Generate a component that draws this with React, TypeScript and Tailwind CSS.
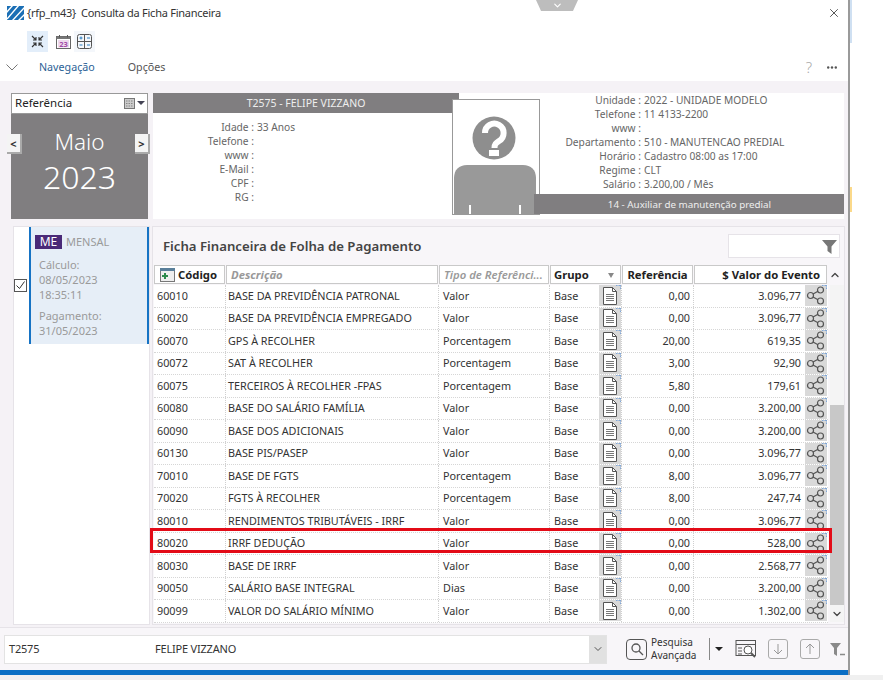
import React from 'react';
import { X, ChevronDown, ChevronUp } from 'lucide-react';

const rows = [
  ['60010', 'BASE DA PREVIDÊNCIA PATRONAL', 'Valor', '0,00', '3.096,77'],
  ['60020', 'BASE DA PREVIDÊNCIA EMPREGADO', 'Valor', '0,00', '3.096,77'],
  ['60070', 'GPS À RECOLHER', 'Porcentagem', '20,00', '619,35'],
  ['60072', 'SAT À RECOLHER', 'Porcentagem', '3,00', '92,90'],
  ['60075', 'TERCEIROS À RECOLHER -FPAS', 'Porcentagem', '5,80', '179,61'],
  ['60080', 'BASE DO SALÁRIO FAMÍLIA', 'Valor', '0,00', '3.200,00'],
  ['60090', 'BASE DOS ADICIONAIS', 'Valor', '0,00', '3.200,00'],
  ['60130', 'BASE PIS/PASEP', 'Valor', '0,00', '3.096,77'],
  ['70010', 'BASE DE FGTS', 'Porcentagem', '8,00', '3.096,77'],
  ['70020', 'FGTS À RECOLHER', 'Porcentagem', '8,00', '247,74'],
  ['80010', 'RENDIMENTOS TRIBUTÁVEIS - IRRF', 'Valor', '0,00', '3.096,77'],
  ['80020', 'IRRF DEDUÇÃO', 'Valor', '0,00', '528,00'],
  ['80030', 'BASE DE IRRF', 'Valor', '0,00', '2.568,77'],
  ['90050', 'SALÁRIO BASE INTEGRAL', 'Dias', '0,00', '3.200,00'],
  ['90099', 'VALOR DO SALÁRIO MÍNIMO', 'Valor', '0,00', '1.302,00'],
];

const leftInfo = [
  ['Idade', '33 Anos'],
  ['Telefone', ''],
  ['www', ''],
  ['E-Mail', ''],
  ['CPF', ''],
  ['RG', ''],
];

const rightInfo = [
  ['Unidade', '2022 - UNIDADE MODELO'],
  ['Telefone', '11 4133-2200'],
  ['www', ''],
  ['Departamento', '510 - MANUTENCAO PREDIAL'],
  ['Horário', 'Cadastro 08:00 as 17:00'],
  ['Regime', 'CLT'],
  ['Salário', '3.200,00 / Mês'],
];

const Corner = () => (
  <svg width="5" height="5" viewBox="0 0 5 5" className="absolute right-0 top-0">
    <path d="M0 0h5v5" fill="none" stroke="#7fa6d8" strokeWidth="2" strokeDasharray="1.5 1" />
  </svg>
);

const DocIcon = () => (
  <span className="relative flex h-[21px] w-[22px] items-center justify-center bg-[#d9d9d9]">
    <svg width="18" height="20" viewBox="0 0 18 20" fill="none" stroke="#555" strokeWidth="1">
      <path d="M2.5 1.5h9l4 4v13h-13z" fill="#fff" />
      <path d="M11.5 1.5v4h4" />
      <path d="M5 8.5h8M5 10.5h8M5 12.5h8M5 14.5h8" stroke="#777" />
    </svg>
    <Corner />
  </span>
);

const ShareIcon = () => (
  <span className="relative flex h-[21px] w-[22px] items-center justify-center bg-[#d9d9d9]">
    <svg width="20" height="19" viewBox="0 0 20 19" fill="none" stroke="#555" strokeWidth="1.2">
      <circle cx="4.5" cy="9.5" r="3" />
      <circle cx="14.5" cy="4" r="3" />
      <circle cx="14.5" cy="15" r="3" />
      <path d="M7 8l5-2.8M7 11l5 2.8" />
    </svg>
    <Corner />
  </span>
);

const Cell = ({ className, children }: { className: string; children: React.ReactNode }) => (
  <div className={`flex items-center border-r border-dotted border-[#cfcfcf] ${className}`}>{children}</div>
);

const HeaderCell = ({ className, children }: { className: string; children: React.ReactNode }) => (
  <div className={`flex h-[19px] items-center overflow-hidden whitespace-nowrap border border-[#c9c9c9] bg-white pt-[1px] text-[11.3px] font-bold ${className}`}>
    {children}
  </div>
);

export default function App() {
  return (
    <div className="h-[680px] w-[883px] overflow-hidden bg-white font-['Noto_Sans',sans-serif] text-[#444]">
      <div className="flex h-[675px]">
        <div className="relative h-[675px] w-[850px] border-r-2 border-[#9a9a9a] bg-white">
          {/* Title */}
          <div className="flex h-[26px] items-center pl-[7px] pr-[7px] text-[11px] tracking-[-0.25px] text-[#333]">
            <svg width="17" height="14" viewBox="0 0 17 14" className="mr-[2px]">
              <rect width="17" height="14" fill="#1b6fb5" />
              <path d="M-1 7L6-1M0 13L12-1M5 15L18 1M11 15l7-7" stroke="#fff" strokeWidth="1.4" fill="none" />
            </svg>
            <span className="ml-[1px]">{'{rfp_m43}'}</span>
            <span className="ml-[5px]">Consulta da Ficha Financeira</span>
            <X size={14} strokeWidth={1.3} className="ml-auto text-[#222]" />
          </div>
          <div className="absolute left-[536px] top-0 flex h-[11px] w-[42px] justify-center bg-[#bdbdbd] [clip-path:polygon(0_0,100%_0,88%_100%,12%_100%)]">
            <ChevronDown size={11} strokeWidth={2.5} className="text-white" />
          </div>

          {/* Toolbar */}
          <div className="flex h-[29px] items-center pl-[27px] pt-[1px]">
            <span className="flex h-[21px] w-[21px] items-center justify-center bg-[#e3eefa]">
              <svg width="13" height="13" viewBox="0 0 13 13" fill="none" stroke="#333" strokeWidth="1.1">
                <path d="M1 1l4 4M5 2v3H2M12 1L8 5M8 2v3h3M1 12l4-4M5 11V8H2M12 12L8 8M8 11V8h3" />
              </svg>
            </span>
            <span className="ml-[7px] flex h-[21px] w-[16px] items-center justify-center">
              <svg width="15" height="15" viewBox="0 0 15 15">
                <rect x="0.5" y="2.5" width="14" height="12" fill="#fff" stroke="#666" />
                <rect x="0.5" y="2.5" width="14" height="2.5" fill="#777" />
                <path d="M3.5 1v2.5M11.5 1v2.5" stroke="#555" />
                <rect x="2" y="6" width="11" height="7.5" fill="#eed9ee" />
                <text x="7.5" y="12.8" textAnchor="middle" fontSize="7.5" fontWeight="700" fill="#a24aa8">23</text>
              </svg>
            </span>
            <span className="ml-[3px] flex h-[21px] w-[21px] items-center justify-center bg-[#f4f7fb]">
              <svg width="15" height="15" viewBox="0 0 15 15" fill="none">
                <rect x="0.5" y="0.5" width="14" height="14" rx="2" stroke="#555" />
                <path d="M0.5 7.5h14M7.5 0.5v14" stroke="#555" />
                <path d="M2.5 4h3M4 2.5v3M10 4h3M2.5 11h3M10 11h3" stroke="#2a7fc1" />
              </svg>
            </span>
          </div>

          {/* Menu */}
          <div className="flex h-[26px] items-center pl-[6px] pr-[11px] pb-[1px] text-[10.7px]">
            <svg width="12" height="7" viewBox="0 0 12 7" fill="none" stroke="#777"><path d="M0.5 0.5L6 6l5.5-5.5" /></svg>
            <span className="ml-[21px] text-[#2b5f96]">Navegação</span>
            <span className="ml-[33px] text-[#555]">Opções</span>
            <span className="ml-auto text-[15px] font-light text-[#aaa]">?</span>
            <svg width="10" height="3" viewBox="0 0 10 3" className="ml-[15px]" fill="#555">
              <circle cx="1.2" cy="1.5" r="1.2" /><circle cx="5" cy="1.5" r="1.2" /><circle cx="8.8" cy="1.5" r="1.2" />
            </svg>
          </div>

          {/* Header */}
          <div className="flex h-[144px] w-[848px] gap-[5px] bg-[#f5f2f6] pl-[11px] pr-[4px] pt-[12px]">
            <div className="relative h-[126px] w-[137px] bg-[#807e80]">
              <div className="flex h-[21px] items-center justify-between border border-[#999] bg-white pl-[3px] pr-[2px] pb-[1px] text-[11.5px] text-[#222]">
                <span>Referência</span>
                <span className="flex items-center">
                  <svg width="11" height="11" viewBox="0 0 11 11">
                    <rect x="0.5" y="0.5" width="10" height="10" fill="#ccc" stroke="#777" />
                    <path d="M2 3h7M2 5.5h7M2 8h7" stroke="#888" strokeDasharray="1.5 1" />
                  </svg>
                  <span className="ml-[2px] h-0 w-0 border-x-[4px] border-t-[4px] border-x-transparent border-t-[#445]" />
                </span>
              </div>
              <div className="pt-[16px] text-center text-white">
                <div className="text-[22.5px] font-light leading-[24px]">Maio</div>
                <div className="mt-[4px] text-[32px] font-light leading-[38px]">2023</div>
              </div>
              <button className="absolute -left-[4px] top-[41px] h-[20px] w-[15px] border-b-2 border-r-2 border-[#aaa] bg-[#f4f4f4] text-[11px] font-bold leading-none text-[#333]">&lt;</button>
              <button className="absolute -right-[2px] top-[41px] h-[20px] w-[15px] border-b-2 border-r-2 border-[#aaa] bg-[#f4f4f4] text-[11px] font-bold leading-none text-[#333]">&gt;</button>
            </div>

            <div className="relative flex h-[126px] flex-1 bg-white text-[10.2px] text-[#666]">
              <div className="w-[306px]">
                <div className="flex h-[20px] items-center justify-center bg-[#807e80] pt-[2px] text-[10.5px] text-[#eee]">T2575 - FELIPE VIZZANO</div>
                <div className="pt-[7px]">
                  {leftInfo.map(([label, value]) => (
                    <div key={label} className="flex h-[14px] items-center leading-none">
                      <span className="w-[101px] text-right">{label} :</span>
                      {value && <span className="ml-[3px]">{value}</span>}
                    </div>
                  ))}
                </div>
              </div>
              <div className="ml-[81px] flex-1">
                {rightInfo.map(([label, value]) => (
                  <div key={label} className="flex h-[14px] items-center leading-none">
                    <span className="w-[101px] text-right">{label} :</span>
                    <span className="ml-[3px]">{value}</span>
                  </div>
                ))}
              </div>
              {/* Foto */}
              <div className="absolute left-[299px] top-[6px] h-[116px] w-[88px] overflow-hidden border border-[#999] bg-white">
                <svg width="86" height="114" viewBox="0 0 86 114">
                  <circle cx="41" cy="38" r="21.5" fill="#8e8e8e" />
                  <path d="M32 33a9.3 9.3 0 1 1 14 8c-3 2-4.5 3-4.5 7" fill="none" stroke="#fff" strokeWidth="6" />
                  <rect x="36" y="50" width="10" height="6" fill="#fff" />
                  <path d="M1 114V78c0-8 5-13 13-13h56c8 0 13 5 13 13v36z" fill="#999" />
                  <path d="M17 105v9M67 105v9" stroke="#fff" strokeWidth="2" />
                </svg>
              </div>
              <div className="absolute bottom-[5px] left-[381px] right-0 flex h-[20px] items-center justify-center bg-[#807e80] pl-[1px] pt-[2px] text-[9.8px] text-[#eee]">
                14 - Auxiliar de manutenção predial
              </div>
            </div>
          </div>

          {/* Corpo */}
          <div className="relative flex h-[402px] w-[848px] bg-[#f5f2f6] pl-[13px] pt-[1px]">
            <div className="relative h-[399px] w-[137px] border border-[#e6e3e8] bg-white">
              <span className="absolute left-0 top-[52px] flex h-[13px] w-[13px] items-center justify-center border border-[#555] bg-white">
                <svg width="11" height="11" viewBox="0 0 11 11"><path d="M1.5 5.5l3 3 5-7" fill="none" stroke="#333" /></svg>
              </span>
              <div className="ml-[15px] h-[117px] border-x-2 border-[#1673c4] bg-[#e6eef7] pl-[4px] pt-[7px] text-[11px] leading-[15px] text-[#9a9a9a]">
                <div className="flex items-center">
                  <span className="flex h-[14px] w-[27px] items-center justify-center bg-[#4a2a78] text-[12px] text-white">ME</span>
                  <span className="ml-[4px]">MENSAL</span>
                </div>
                <div className="mt-[8px] pl-[4px]">Cálculo:</div>
                <div className="pl-[4px]">08/05/2023</div>
                <div className="pl-[4px]">18:35:11</div>
                <div className="mt-[6px] pl-[4px]">Pagamento:</div>
                <div className="pl-[4px]">31/05/2023</div>
              </div>
            </div>

            <div className="ml-[2px] h-[399px] w-[693px] border border-[#e6e3e8] bg-[#f8f6f9]">
              <div className="flex h-[38px] items-start pl-[10px] pr-[4px] pt-[7px]">
                <span className="mt-[3px] text-[13.2px] font-semibold text-[#444]">Ficha Financeira de Folha de Pagamento</span>
                <div className="ml-auto flex h-[24px] w-[112px] items-center justify-end border border-[#e6e3e8] bg-white pr-[2px]">
                  <svg width="15" height="15" viewBox="0 0 15 15"><path d="M0 1h15L9.5 7.5V15l-4-3V7.5z" fill="#777" /></svg>
                </div>
              </div>
              <div className="flex gap-[1px] pl-[1px] text-[#222]">
                <HeaderCell className="w-[71px] pl-[5px]">
                  <svg width="15" height="14" viewBox="0 0 15 14" className="mr-[3px]">
                    <rect x="0.5" y="1.5" width="14" height="12" fill="#eee" stroke="#777" />
                    <rect x="0" y="0" width="15" height="3" fill="#5a7f9a" />
                    <path d="M2 8h6M5 5v6" stroke="#2c8a4b" strokeWidth="2" />
                  </svg>
                  Código
                </HeaderCell>
                <HeaderCell className="w-[212px] pl-[4px] italic text-[#999]">Descrição</HeaderCell>
                <HeaderCell className="w-[110px] pl-[4px] font-semibold italic text-[#999]">Tipo de Referênci...</HeaderCell>
                <HeaderCell className="w-[71px] justify-between pl-[3px] pr-[6px]">
                  Grupo
                  <span className="h-0 w-0 border-x-[3px] border-t-[5px] border-x-transparent border-t-[#888]" />
                </HeaderCell>
                <HeaderCell className="w-[71px] justify-center">Referência</HeaderCell>
                <HeaderCell className="w-[133px] justify-end pr-[6px]">$ Valor do Evento</HeaderCell>
                <div className="flex h-[19px] w-[14px] items-center justify-center">
                  <ChevronUp size={12} strokeWidth={2.5} className="text-[#444]" />
                </div>
              </div>
              <div className="flex pt-[1px]">
                <div className="ml-[1px] w-[674px] bg-white text-[10.8px] text-[#333]">
                  {rows.map(([code, desc, type, ref, value]) => (
                    <div key={code} className="flex h-[22.5px] border-b border-dotted border-[#d6d6d6]">
                      <Cell className="w-[72px] pl-[3px]">{code}</Cell>
                      <Cell className="w-[213px] pl-[2px]">{desc}</Cell>
                      <Cell className="w-[111px] pl-[4px]">{type}</Cell>
                      <Cell className="w-[72px] justify-between pl-[4px]">Base<DocIcon /></Cell>
                      <Cell className="w-[72px] justify-end pr-[3px]">{ref}</Cell>
                      <div className="flex flex-1 items-center justify-end pr-[1px]">
                        <span className="mr-[4px]">{value}</span>
                        <ShareIcon />
                      </div>
                    </div>
                  ))}
                </div>
                <div className="ml-[2px] flex h-[337px] w-[14px] flex-col bg-[#f4f4f4]">
                  <div className="h-[120px]" />
                  <div className="w-full flex-1 bg-[#c8c8c8]" />
                  <div className="flex h-[17px] items-center justify-center">
                    <ChevronDown size={12} strokeWidth={2.5} className="text-[#444]" />
                  </div>
                </div>
              </div>
            </div>

            {/* Destaque */}
            <div className="pointer-events-none absolute left-[150px] top-[303px] h-[25px] w-[682px] border-[3px] border-[#e30b17]" />
          </div>

          {/* Rodape */}
          <div className="flex h-[43px] w-[848px] items-center border-t border-[#e6e3e8] bg-[#f8f6f9] pl-[4px]">
            <div className="flex h-[29px] w-[603px] items-center border border-[#e3e3e3] bg-white text-[11px] tracking-[-0.2px] text-[#333]">
              <span className="w-[150px] pl-[4px]">T2575</span>
              <span>FELIPE VIZZANO</span>
              <span className="ml-auto flex h-full w-[17px] items-center justify-center bg-[#e1e1e1]">
                <ChevronDown size={12} className="text-[#555]" />
              </span>
            </div>
            <div className="ml-[19px] flex h-[29px] items-center">
              <span className="flex h-[21px] w-[21px] items-center justify-center rounded-[4px] border border-[#555]">
                <svg width="14" height="14" viewBox="0 0 14 14" fill="none" stroke="#555" strokeWidth="1.3"><circle cx="6" cy="6" r="4" /><path d="M9 9l4 4" /></svg>
              </span>
              <span className="ml-[4px] text-[10px] leading-[13px] text-[#333]">Pesquisa<br />Avançada</span>
              <span className="ml-[13px] h-[22px] w-px bg-[#888]" />
              <span className="ml-[5px] h-0 w-0 border-x-[4px] border-t-[4px] border-x-transparent border-t-[#222]" />
              <svg width="22" height="22" viewBox="0 0 22 22" fill="none" stroke="#555" className="ml-[12px]">
                <rect x="1" y="2.5" width="19.5" height="15" />
                <path d="M1 6.5h19.5M3 10h4M3 13h4M3 16h4" />
                <circle cx="13" cy="12" r="4" fill="#fff" />
                <path d="M16 15l4 4" strokeWidth="1.8" />
              </svg>
              <span className="ml-[11px] flex h-[20px] w-[20px] items-center justify-center rounded-[3px] border border-[#aaa]">
                <svg width="12" height="12" viewBox="0 0 12 12" fill="none" stroke="#999"><path d="M6 1v10M2 7l4 4 4-4" /></svg>
              </span>
              <span className="ml-[12px] flex h-[20px] w-[20px] items-center justify-center rounded-[3px] border border-[#aaa]">
                <svg width="12" height="12" viewBox="0 0 12 12" fill="none" stroke="#999"><path d="M6 11V1M2 5l4-4 4 4" /></svg>
              </span>
              <svg width="15" height="13" viewBox="0 0 15 13" className="ml-[10px]">
                <path d="M0 0h11L7 5v8l-3-2V5z" fill="#8a8a8a" />
                <path d="M10 11.5h5" stroke="#8a8a8a" strokeWidth="1.5" />
              </svg>
            </div>
          </div>
          <div className="h-[5px] w-[848px] bg-[#0a6fc4]" />
        </div>

        {/* Janela de tras */}
        <div className="w-[2px]">
          <div className="h-[43px] bg-[#cfe0f2]" />
          <div className="h-[144px]" />
          <div className="h-[25px] bg-[#fbd98a]" />
        </div>
      </div>
      <div className="h-[5px] w-full bg-[#f0f0f0]" />
    </div>
  );
}
